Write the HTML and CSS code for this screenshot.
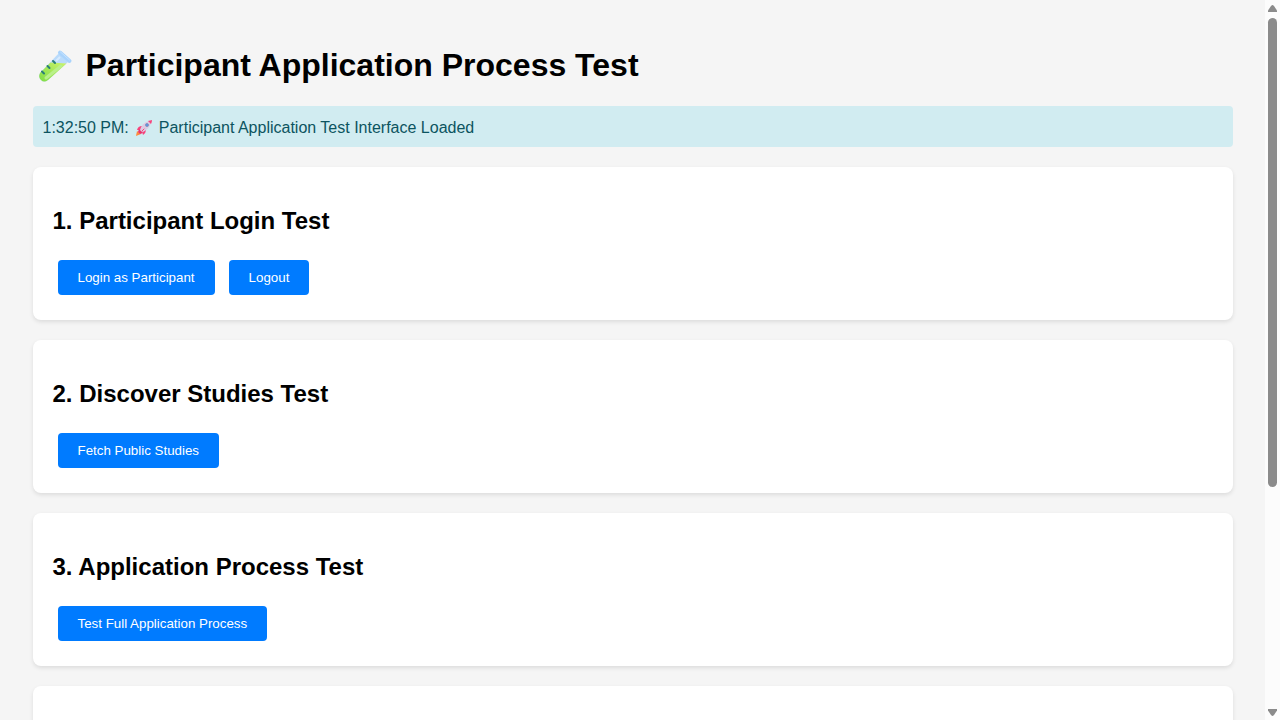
FILE: index.html
```html
<!DOCTYPE html>
<html lang="en">
<head>
<meta charset="utf-8">
<title>Participant Application Process Test</title>
<link rel="stylesheet" href="styles.css">
</head>
<body>
<div class="viewport">
  <div class="page">
    <main class="container">
      <h1 class="title">
        <svg class="title-icon" viewBox="0 0 35 35" aria-hidden="true">
          <defs>
            <linearGradient id="liquid" x1="0" y1="1" x2="1" y2="0">
              <stop offset="0" stop-color="#7fdc45"/>
              <stop offset="1" stop-color="#cdf46b"/>
            </linearGradient>
          </defs>
          <path d="M21 5 30 14 10 32Q6 35 3 32Q0 29 2 25Z" fill="#badbfb"/>
          <path d="M12.500 14.500 28.500 15.500 10 32Q6 35 3 32Q0 29 2 25Z" fill="url(#liquid)"/>
          <path d="M23 18 8 30" stroke="#b9f08a" stroke-width="3" stroke-linecap="round"/>
          <path d="m22 9-4 4" stroke="#d6eaff" stroke-width="2"/>
          <path d="m22 4.500 9.500 8.500" stroke="#a9d3fc" stroke-width="4" stroke-linecap="round"/>
          <path d="m22.500 4 9 8" stroke="#c6e3ff" stroke-width="1" stroke-linecap="round"/>
          <path d="m15 13 2 2m-7.500 3 2 2m-7.500 3.500 2 2" stroke="#2a7f78" stroke-width="2" stroke-linecap="round"/>
        </svg>
        <span>Participant Application Process Test</span>
      </h1>
      <div class="log">
        <span>1:32:50 PM:</span>
        <svg class="log-icon" viewBox="0 0 18 18" aria-hidden="true">
          <path d="M1 17 2 12 6 15Z" fill="#ff8a3c"/>
          <path d="M7 7Q3 7 2 11L6 11ZM11 11Q11 14 8 16L7 12Z" fill="#f8437c"/>
          <path d="M5 11Q7 4 14 2L16 4Q14 10 8 13Z" fill="#dccbe2"/>
          <path d="m4 10 4 4-3 1-2-2Z" fill="#e9346e"/>
          <path d="m13 2 4-1q0 2-1 4Z" fill="#f8437c"/>
          <path d="m9 10-2 2" stroke="#f8437c" stroke-width="1" stroke-linecap="round"/>
          <circle cx="12" cy="6" r="1.500" fill="#4b98e5" stroke="#8c93bf" stroke-width="1"/>
        </svg>
        <span>Participant Application Test Interface Loaded</span>
      </div>
      <section class="card">
        <h2 class="card-title">1. Participant Login Test</h2>
        <div class="actions">
          <button class="button" type="button">Login as Participant</button>
          <button class="button" type="button">Logout</button>
        </div>
      </section>
      <section class="card">
        <h2 class="card-title">2. Discover Studies Test</h2>
        <div class="actions">
          <button class="button" type="button">Fetch Public Studies</button>
        </div>
      </section>
      <section class="card">
        <h2 class="card-title">3. Application Process Test</h2>
        <div class="actions">
          <button class="button" type="button">Test Full Application Process</button>
        </div>
      </section>
      <section class="card card-empty"></section>
    </main>
  </div>
  <div class="scrollbar" aria-hidden="true">
    <svg class="arrow" viewBox="0 0 9 7"><path d="M4.500 0Q5 0 6 1L9 5.500V7H0V5.500L3 1Q4 0 4.500 0Z"/></svg>
    <div class="track"><div class="thumb"></div></div>
    <svg class="arrow" viewBox="0 0 9 7"><path d="M4.500 7Q5 7 6 6L9 1.500V0H0V1.500L3 6Q4 7 4.500 7Z"/></svg>
  </div>
</div>
</body>
</html>
```
FILE: styles.css
```css
body {
  margin: 0;
  background: #f5f5f5;
  color: #000;
  font-family: Arial, "Liberation Sans", sans-serif;
  font-size: 16px;
}

.viewport {
  display: flex;
  height: 100vh;
  overflow: hidden;
}

.page {
  flex: 1;
  min-width: 0;
  overflow: hidden;
}

.container {
  box-sizing: border-box;
  max-width: 1240px;
  margin: 0 auto;
  padding: 20px;
}

.title {
  display: flex;
  align-items: center;
  gap: 13px;
  margin: 24px 0 20px;
  padding-left: 5px;
  font-size: 32px;
  line-height: 42px;
}

.title-icon {
  width: 35px;
  height: 35px;
}

.log {
  display: flex;
  align-items: center;
  gap: 6px;
  margin-bottom: 20px;
  padding: 11px 10px 9px;
  border-radius: 4px;
  background: #d1ecf1;
  color: #0c5460;
  line-height: 21px;
}

.log-icon {
  width: 18px;
  height: 18px;
}

.card {
  margin-bottom: 20px;
  padding: 20px;
  border-radius: 8px;
  background: #fff;
  box-shadow: 0 2px 4px rgba(0, 0, 0, 0.1);
}

.card-empty {
  min-height: 113px;
}

.card-title {
  margin: 20px 0;
  font-size: 24px;
  line-height: 28px;
}

.actions {
  display: flex;
  flex-wrap: wrap;
  gap: 14px;
  padding: 5px;
}

.button {
  padding: 10px 20px;
  border: 0;
  border-radius: 4px;
  background: #007bff;
  color: #fff;
  font-family: Arial, "Liberation Sans", sans-serif;
  cursor: pointer;
}

.scrollbar {
  display: flex;
  flex: none;
  flex-direction: column;
  align-items: center;
  box-sizing: border-box;
  width: 15px;
  padding: 5px 0 4px;
  background: #fcfcfc;
}

.arrow {
  flex: none;
  width: 9px;
  height: 7px;
  fill: #8b8b8b;
}

.track {
  flex: 1;
  width: 9px;
  padding: 6px 0 2px;
}

.thumb {
  height: 68%;
  border-radius: 5px;
  background: #8b8b8b;
}
```
